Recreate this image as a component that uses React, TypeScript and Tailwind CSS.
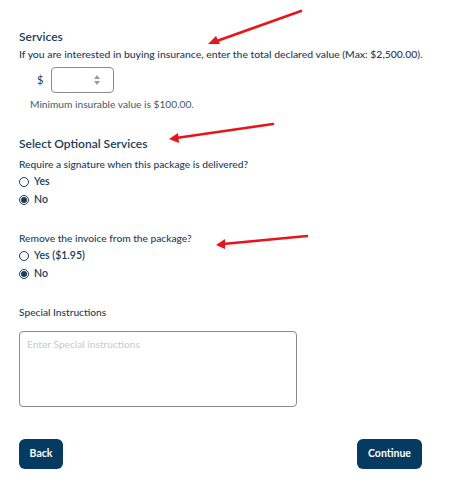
import React from "react";

const Radio = ({ label, checked }: { label: string; checked?: boolean }) => (
  <label className="mt-[4px] flex h-[14px] items-center gap-[5px] text-[10.5px] font-semibold text-[#1b3d5a]">
    <span className="flex h-[10px] w-[10px] items-center justify-center rounded-full border border-[#1b3d5a] bg-white">
      {checked && <span className="h-[6px] w-[6px] rounded-full bg-[#1b3d5a]" />}
    </span>
    {label}
  </label>
);

const Arrows = () => (
  <svg className="pointer-events-none absolute inset-0" width="449" height="494">
    <g stroke="#e8141a" strokeWidth="2.5" strokeLinecap="round" fill="#e8141a">
      <line x1="301" y1="11" x2="214" y2="42" />
      <polygon points="208,44 216,36 220,44" stroke="none" />
      <line x1="273" y1="124" x2="176" y2="138" />
      <polygon points="169,139 178,133 179,143" stroke="none" />
      <line x1="307" y1="236" x2="223" y2="244" />
      <polygon points="216,245 225,239 225,249" stroke="none" />
    </g>
  </svg>
);

export default function App() {
  return (
    <div className="relative h-[494px] w-[449px] bg-white font-['Lato','Liberation_Sans',sans-serif] text-[#1b3d5a]">
      <div className="flex flex-col pl-[19px] pr-[27px] pt-[29px]">
        <h2 className="text-[12px] font-semibold leading-[16px]">Services</h2>
        <p className="mt-[2px] whitespace-nowrap text-[10.4px] font-medium leading-[14px]">
          If you are interested in buying insurance, enter the total declared value (Max: $2,500.00).
        </p>
        <div className="mt-[6px] flex items-center gap-[8px] pl-[18px]">
          <span className="text-[11px]">$</span>
          <div className="flex h-[26px] w-[63px] items-center justify-end rounded-[4px] border border-[#8a8a8a] pr-[12px]">
            <svg width="8" height="12" viewBox="0 0 8 12">
              <polygon points="4,1 7,5 1,5" fill="#9a9a9a" />
              <polygon points="4,11 7,7 1,7" fill="#9a9a9a" />
            </svg>
          </div>
        </div>
        <p className="ml-[11px] mt-[4px] text-[10.2px] leading-[14px] text-[#3f5a6c]">
          Minimum insurable value is $100.00.
        </p>

        <h2 className="mt-[25px] text-[12px] font-semibold leading-[16px]">Select Optional Services</h2>
        <p className="mt-[5px] text-[10.2px] font-medium leading-[14px]">
          Require a signature when this package is delivered?
        </p>
        <Radio label="Yes" />
        <Radio label="No" checked />

        <p className="mt-[24px] text-[10.2px] font-medium leading-[14px]">Remove the invoice from the package?</p>
        <Radio label="Yes ($1.95)" />
        <Radio label="No" checked />

        <p className="mt-[24px] text-[10.2px] font-medium leading-[14px]">Special Instructions</p>
        <textarea
          placeholder="Enter Special instructions"
          className="mt-[12px] h-[76px] w-[278px] resize-none rounded-[4px] border border-[#8a8a8a] px-[7px] py-[5px] text-[10.2px] leading-[14px] placeholder:text-[#c9c9c9]"
        />

        <div className="mt-[32px] flex justify-between">
          <button className="h-[30px] w-[44px] rounded-[6px] bg-[#053b60] text-[10.5px] font-bold text-white">
            Back
          </button>
          <button className="h-[30px] w-[65px] rounded-[6px] bg-[#053b60] text-[10.5px] font-bold text-white">
            Continue
          </button>
        </div>
      </div>
      <Arrows />
    </div>
  );
}
